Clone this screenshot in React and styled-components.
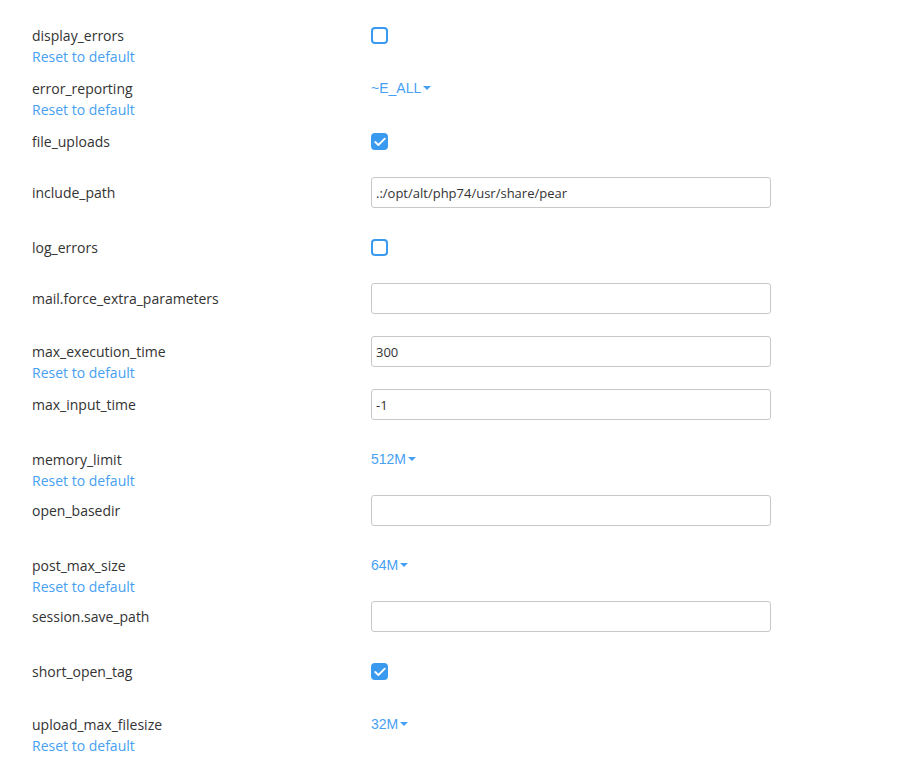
import React from 'react'
import styled, { createGlobalStyle } from 'styled-components'

const GlobalStyle = createGlobalStyle`
  body {
    margin: 0;
    background: #fff;
    font-family: "Open Sans", sans-serif;
    color: #333;
  }
`;

const Page = styled.div`
  padding: 20px 0 0 32px;
`;

const Row = styled.div`
  display: grid;
  grid-template-columns: 339px 401px;
  align-items: start;
  min-height: ${(props) => props.h}px;
`;

const LabelCell = styled.div`
  display: flex;
  flex-direction: column;
  padding-top: 5px;
  font-size: 14px;
  line-height: 21px;
`;

const Name = styled.span`
  color: #333;
`;

const Reset = styled.a`
  color: #479ff2;
  text-decoration: none;
  cursor: pointer;
`;

const ControlCell = styled.div`
  display: flex;
  align-items: center;
  min-height: 31px;
`;

const TextInput = styled.input`
  box-sizing: border-box;
  width: 400px;
  height: 31px;
  padding: 0 4px;
  border: 1px solid #c8c8c8;
  border-radius: 3px;
  font-family: "Open Sans", sans-serif;
  font-size: 13px;
  color: #333;
  outline: none;
`;

const Box = styled.span`
  box-sizing: border-box;
  width: 17px;
  height: 17px;
  border: 2px solid #3a9af0;
  border-radius: 4px;
  background: ${(props) => (props.checked ? '#3a9af0' : '#fff')};
  display: flex;
  align-items: center;
  justify-content: center;
`;

const Select = styled.span`
  display: inline-flex;
  align-items: center;
  gap: 2px;
  margin-top: -1px;
  font-family: "Liberation Sans", Arial, sans-serif;
  font-size: 14px;
  color: #479ff2;
  cursor: pointer;
`;

const Caret = styled.span`
  width: 0;
  height: 0;
  border-left: 4px solid transparent;
  border-right: 4px solid transparent;
  border-top: 4px solid #479ff2;
`;

const rows = [
  { name: 'display_errors', type: 'check', value: false, reset: true, h: 53 },
  { name: 'error_reporting', type: 'select', value: '~E_ALL', reset: true, h: 53 },
  { name: 'file_uploads', type: 'check', value: true, h: 51 },
  { name: 'include_path', type: 'text', value: '.:/opt/alt/php74/usr/share/pear', h: 55 },
  { name: 'log_errors', type: 'check', value: false, h: 51 },
  { name: 'mail.force_extra_parameters', type: 'text', value: '', h: 53 },
  { name: 'max_execution_time', type: 'text', value: '300', reset: true, h: 53 },
  { name: 'max_input_time', type: 'text', value: '-1', h: 55 },
  { name: 'memory_limit', type: 'select', value: '512M', reset: true, h: 51 },
  { name: 'open_basedir', type: 'text', value: '', h: 55 },
  { name: 'post_max_size', type: 'select', value: '64M', reset: true, h: 51 },
  { name: 'session.save_path', type: 'text', value: '', h: 55 },
  { name: 'short_open_tag', type: 'check', value: true, h: 53 },
  { name: 'upload_max_filesize', type: 'select', value: '32M', reset: true, h: 53 },
];

function Control({ row }) {
  if (row.type === 'check') {
    return (
      <Box checked={row.value}>
        {row.value && (
          <svg width="12" height="10" viewBox="0 0 12 10">
            <path d="M1.2 5 L4.4 8 L10.8 1.6" fill="none" stroke="#fff" strokeWidth="1.8" strokeLinecap="round" strokeLinejoin="round" />
          </svg>
        )}
      </Box>
    );
  }
  if (row.type === 'select') {
    return (
      <Select>
        {row.value}
        <Caret />
      </Select>
    );
  }
  return <TextInput defaultValue={row.value} />;
}

export default function App() {
  return (
    <Page>
      <GlobalStyle />
      {rows.map((r) => (
        <Row key={r.name} h={r.h}>
          <LabelCell>
            <Name>{r.name}</Name>
            {r.reset && <Reset>Reset to default</Reset>}
          </LabelCell>
          <ControlCell>
            <Control row={r} />
          </ControlCell>
        </Row>
      ))}
    </Page>
  );
}
